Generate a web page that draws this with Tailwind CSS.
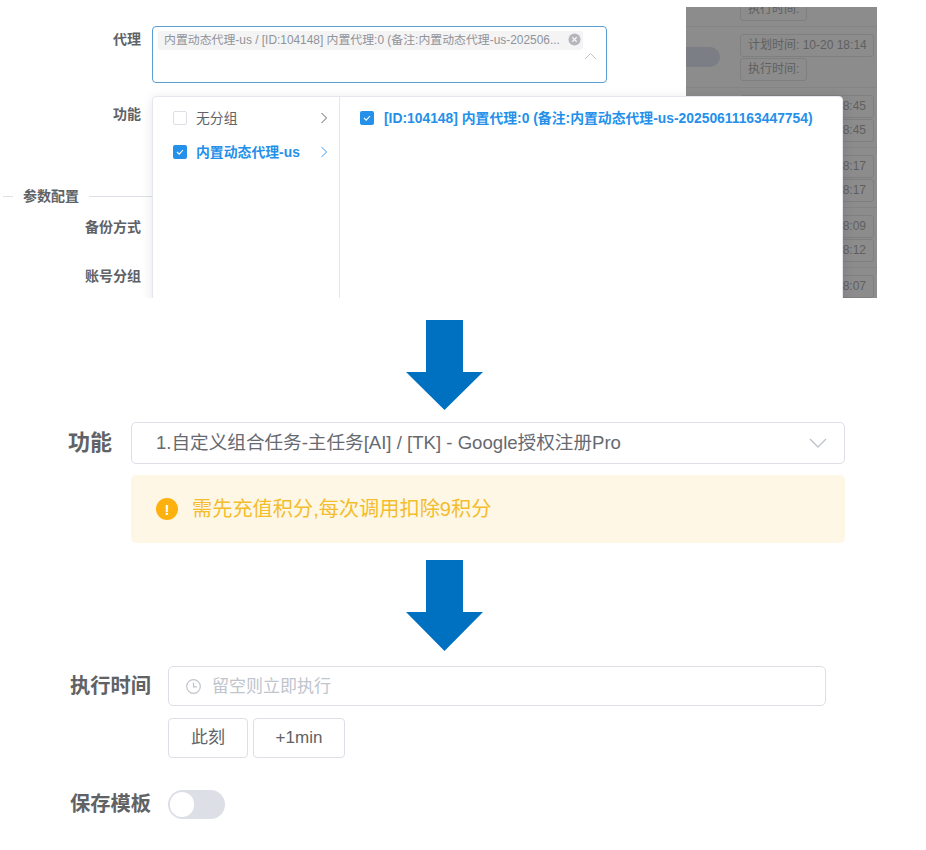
<!DOCTYPE html>
<html lang="zh">
<head>
<meta charset="UTF-8" />
<script src="https://cdn.jsdelivr.net/npm/@tailwindcss/browser@4"></script>
<title>配置说明</title>
</head>
<body class="bg-white font-['Liberation_Sans','Noto_Sans_CJK_SC',sans-serif]">
<div class="w-[926px] h-[850px] overflow-hidden">

  <!-- top: cropped proxy dropdown shot -->
  <div class="relative h-[298px] overflow-hidden">
    <!-- dimmed table behind the form -->
    <div class="absolute left-[686px] top-[7px] w-[191px] h-[291px] bg-[#8c8c8c] overflow-hidden">
      <div class="h-[20px] border-b border-[#848484] relative">
        <div class="absolute left-[54px] -top-[9px] h-[23px] px-[7px] leading-[21px] border border-[#7f7f7f] rounded-[3px] text-[12px] text-[#606060]">执行时间:</div>
      </div>
      <div class="h-[61px] border-b border-[#848484] relative pt-[7px] pl-[54px]">
        <div class="absolute -left-[10px] top-[20px] w-[44px] h-[20px] rounded-full bg-[#7b7e84]"></div>
        <div class="w-[134px] h-[23px] px-[7px] leading-[21px] border border-[#7f7f7f] rounded-[3px] text-[12px] text-[#606060] whitespace-nowrap">计划时间: 10-20 18:14</div>
        <div class="mt-[1px] w-fit h-[23px] px-[7px] leading-[21px] border border-[#7f7f7f] rounded-[3px] text-[12px] text-[#606060]">执行时间:</div>
      </div>
      <div class="h-[60px] border-b border-[#848484] pt-[7px] pl-[54px]">
        <div class="w-[134px] h-[23px] pr-[7px] text-right leading-[21px] border border-[#7f7f7f] rounded-[3px] text-[12px] text-[#606060]">10-20 18:45</div>
        <div class="mt-[1px] w-[134px] h-[23px] pr-[7px] text-right leading-[21px] border border-[#7f7f7f] rounded-[3px] text-[12px] text-[#606060]">10-20 18:45</div>
      </div>
      <div class="h-[60px] border-b border-[#848484] pt-[7px] pl-[54px]">
        <div class="w-[134px] h-[23px] pr-[7px] text-right leading-[21px] border border-[#7f7f7f] rounded-[3px] text-[12px] text-[#606060]">10-20 18:17</div>
        <div class="mt-[1px] w-[134px] h-[23px] pr-[7px] text-right leading-[21px] border border-[#7f7f7f] rounded-[3px] text-[12px] text-[#606060]">10-20 18:17</div>
      </div>
      <div class="h-[60px] border-b border-[#848484] pt-[7px] pl-[54px]">
        <div class="w-[134px] h-[23px] pr-[7px] text-right leading-[21px] border border-[#7f7f7f] rounded-[3px] text-[12px] text-[#606060]">10-20 18:09</div>
        <div class="mt-[1px] w-[134px] h-[23px] pr-[7px] text-right leading-[21px] border border-[#7f7f7f] rounded-[3px] text-[12px] text-[#606060]">10-20 18:12</div>
      </div>
      <div class="pt-[7px] pl-[54px]">
        <div class="w-[134px] h-[23px] pr-[7px] text-right leading-[21px] border border-[#7f7f7f] rounded-[3px] text-[12px] text-[#606060]">10-20 18:07</div>
      </div>
    </div>

    <!-- form labels -->
    <div class="relative w-[141px] text-right font-bold text-[14px] text-[#606266]">
      <div class="pt-[30px] leading-[18px]">代理</div>
      <div class="mt-[57px] leading-[18px]">功能</div>
    </div>
    <div class="absolute left-[3px] top-[188px] w-[149px] flex items-center">
      <span class="w-[10px] h-px bg-[#dcdfe6]"></span>
      <span class="ml-[10px] mr-[10px] font-bold text-[14px] leading-[16px] text-[#606266] whitespace-nowrap">参数配置</span>
      <span class="flex-1 h-px bg-[#dcdfe6]"></span>
    </div>
    <div class="absolute left-0 top-[218px] w-[141px] text-right font-bold text-[14px] text-[#606266]">
      <div class="leading-[18px]">备份方式</div>
      <div class="mt-[31px] leading-[18px]">账号分组</div>
    </div>

    <!-- proxy select -->
    <div class="absolute left-[152px] top-[26px] w-[455px] h-[57px] rounded-[4px] border border-[#5a9fd4] bg-white">
      <div class="absolute left-[5px] top-[4px] w-[425px] h-[19px] rounded-[3px] bg-[#f4f4f5] flex items-center pl-[6px] pt-[1px] text-[11.9px] text-[#909399]">
        <span class="whitespace-nowrap">内置动态代理-us / [ID:104148] 内置代理:0 (备注:内置动态代理-us-202506...</span>
        <svg class="absolute left-[410px] top-[2px]" width="13" height="13" viewBox="0 0 13 13"><circle cx="6.5" cy="6.5" r="6" fill="#b4b6bb"/><path d="M4.3 4.3l4.4 4.4M8.7 4.3l-4.4 4.4" stroke="#f4f4f5" stroke-width="1.3"/></svg>
      </div>
      <svg class="absolute left-[431px] top-[25px]" width="13" height="8" viewBox="0 0 13 8"><path d="M1 7l5.5-5.5L12 7" fill="none" stroke="#c0c4cc" stroke-width="1"/></svg>
    </div>

    <!-- cascader popover -->
    <div class="absolute left-[152px] top-[96px] w-[691px] h-[210px] rounded-[4px] bg-white border border-[#e4e7ed] shadow-[0_2px_12px_rgba(0,0,0,0.1)] flex">
      <div class="w-[187px] h-full border-r border-[#e4e7ed] pl-[20px] pr-[11px] pt-[4px] text-[13.85px]">
        <div class="h-[34px] flex items-center text-[#606266]">
          <span class="w-[14px] h-[14px] rounded-[2px] border border-[#dcdfe6] bg-white"></span>
          <span class="ml-[9px]">无分组</span>
          <svg class="ml-auto" width="8" height="12" viewBox="0 0 8 12"><path d="M1.5 1l5 5-5 5" fill="none" stroke="#606266" stroke-width="1"/></svg>
        </div>
        <div class="h-[34px] flex items-center font-bold">
          <span class="w-[14px] h-[14px] rounded-[2px] bg-[#2490ea] flex items-center justify-center">
            <svg width="10" height="10" viewBox="0 0 10 10"><path d="M2 5l2.2 2.2L8 3" fill="none" stroke="#fff" stroke-width="1.1"/></svg>
          </span>
          <span class="ml-[9px] text-[#2490ea]">内置动态代理-us</span>
          <svg class="ml-auto" width="8" height="12" viewBox="0 0 8 12"><path d="M1.5 1l5 5-5 5" fill="none" stroke="#409eff" stroke-width="1"/></svg>
        </div>
      </div>
      <div class="flex-1 pl-[20px] pt-[4px]">
        <div class="h-[34px] flex items-center font-bold text-[#2490ea]">
          <span class="w-[14px] h-[14px] rounded-[2px] bg-[#2490ea] flex items-center justify-center">
            <svg width="10" height="10" viewBox="0 0 10 10"><path d="M2 5l2.2 2.2L8 3" fill="none" stroke="#fff" stroke-width="1.1"/></svg>
          </span>
          <span class="ml-[10px] whitespace-nowrap text-[13.85px]">[ID:104148] 内置代理:0 (备注:内置动态代理-us-20250611163447754)</span>
        </div>
      </div>
    </div>
  </div>

  <!-- arrow 1 -->
  <div class="mt-[22px] ml-[406px] h-[90px]">
    <svg width="77" height="90" viewBox="0 0 77 90" class="block"><path d="M20 0h37v52h20L38.5 90 0 52h20z" fill="#0070c0"/></svg>
  </div>

  <!-- function select + notice -->
  <div class="mt-[12px] flex">
    <div class="w-[131px] pl-[68px] font-bold text-[22px] leading-[42px] text-[#606266] whitespace-nowrap">功能</div>
    <div class="w-[714px]">
      <div class="h-[42px] rounded-[5px] border border-[#dcdfe6] flex items-center pl-[24px] pr-[17px] text-[18.6px] text-[#666a70]">
        <span>1.自定义组合任务-主任务[AI] / [TK] - Google授权注册Pro</span>
        <svg class="ml-auto" width="18" height="11" viewBox="0 0 18 11"><path d="M1 1l8 8 8-8" fill="none" stroke="#c0c4cc" stroke-width="1.4"/></svg>
      </div>
      <div class="mt-[11px] h-[68px] rounded-[5px] bg-[#fef7e6] flex items-center pl-[25px]">
        <span class="w-[22px] h-[22px] rounded-full bg-[#fdb10f] flex items-center justify-center text-white font-bold text-[15px] leading-none">!</span>
        <span class="ml-[14px] text-[20.2px] text-[#f3bd2c]">需先充值积分,每次调用扣除9积分</span>
      </div>
    </div>
  </div>

  <!-- arrow 2 -->
  <div class="mt-[17px] ml-[406px] h-[91px]">
    <svg width="77" height="91" viewBox="0 0 77 91" class="block"><path d="M20 0h37v52h20L38.5 91 0 52h20z" fill="#0070c0"/></svg>
  </div>

  <!-- execute time -->
  <div class="mt-[15px] flex">
    <div class="w-[168px] pl-[70px] font-bold text-[20.25px] leading-[40px] text-[#606266] whitespace-nowrap">执行时间</div>
    <div>
      <div class="w-[658px] h-[40px] rounded-[5px] border border-[#dcdfe6] flex items-center pl-[17px] text-[17px] text-[#c0c4cc]">
        <svg width="15" height="15" viewBox="0 0 15 15"><circle cx="7.5" cy="7.5" r="6.8" fill="none" stroke="#c0c4cc" stroke-width="1.2"/><path d="M7.5 3.6v4.2h3.4" fill="none" stroke="#c0c4cc" stroke-width="1.2"/></svg>
        <span class="ml-[11px] pt-[1px]">留空则立即执行</span>
      </div>
      <div class="mt-[12px] flex gap-[5px]">
        <button class="w-[80px] h-[40px] rounded-[4px] border border-[#dcdfe6] text-[17px] text-[#606266]">此刻</button>
        <button class="w-[92px] h-[40px] rounded-[4px] border border-[#dcdfe6] text-[17px] text-[#606266]">+1min</button>
      </div>
    </div>
  </div>

  <!-- save template -->
  <div class="mt-[32px] flex items-center">
    <div class="w-[168px] pl-[70px] font-bold text-[20.25px] leading-[29px] text-[#606266] whitespace-nowrap">保存模板</div>
    <div class="w-[57px] h-[29px] rounded-full bg-[#dcdfe6] p-[2px]">
      <div class="w-[24px] h-[25px] rounded-full bg-white"></div>
    </div>
  </div>
</div>
</body>
</html>
